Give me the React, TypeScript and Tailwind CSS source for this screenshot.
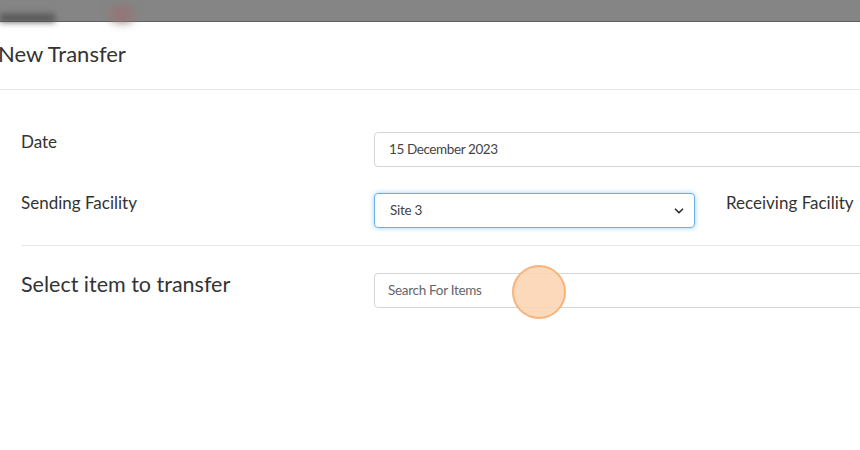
import { ChevronDown } from "lucide-react";

const font = { fontFamily: "Lato, 'Open Sans', sans-serif" };

export default function App() {
  return (
    <div className="relative h-[450px] w-[860px] overflow-hidden bg-white text-[#333]" style={font}>
      {/* backdrop strip above the modal */}
      <div className="relative h-[22px] bg-[#858585] border-b border-[#5f5f5f]">
        <div className="absolute left-0 top-[14px] h-[8px] w-[55px] bg-[#555] blur-[3px]" />
        <div className="absolute left-[110px] top-[6px] h-[16px] w-[24px] rounded-full bg-[#957575] blur-[5px]" />
      </div>

      <div className="flex h-[68px] items-center border-b border-[#e8e8e8]">
        <h4 className="-ml-[2px] -mt-[4px] text-[22px] leading-none text-[#333]">New Transfer</h4>
      </div>

      <div className="pl-[21px] pt-[42px]">
        <div className="flex items-center">
          <div className="w-[353px] shrink-0 text-[17px] -mt-[16px]">Date</div>
          <div className="flex h-[35px] w-[520px] shrink-0 items-center rounded-[4px] border border-[#d6d6d6] px-[14px] text-[13.5px] tracking-[-0.4px] text-[#444]">
            15 December 2023
          </div>
        </div>

        <div className="mt-[26px] flex items-center">
          <div className="w-[353px] shrink-0 text-[17px] -mt-[16px]">Sending Facility</div>
          <div className="flex h-[35px] w-[321px] shrink-0 items-center justify-between rounded-[4px] border border-[#66afe9] px-[14px] text-[13.5px] tracking-[-0.3px] text-[#444] shadow-[0_0_5px_rgba(102,175,233,0.6)]">
            <span className="pl-[1px]">Site 3</span>
            <ChevronDown className="-mr-[6px] h-[14px] w-[14px] text-[#333]" strokeWidth={3} />
          </div>
          <div className="ml-[31px] shrink-0 text-[17px] -mt-[16px] whitespace-nowrap">Receiving Facility</div>
        </div>

        <div className="mt-[17px] border-t border-[#e8e8e8]" />

        <div className="mt-[27px] flex items-center">
          <div className="w-[353px] shrink-0 text-[21.5px] -mt-[12px]">Select item to transfer</div>
          <div className="flex h-[35px] w-[520px] shrink-0 items-center rounded-[4px] border border-[#d6d6d6] px-[13px] text-[13.5px] tracking-[-0.3px] text-[#666]">
            Search For Items
          </div>
        </div>
      </div>

      {/* click marker */}
      <div className="absolute left-[512px] top-[265px] h-[54px] w-[54px] rounded-full border-2 border-[#f6b47c] bg-[#fdd5b4]/90" />
    </div>
  );
}
